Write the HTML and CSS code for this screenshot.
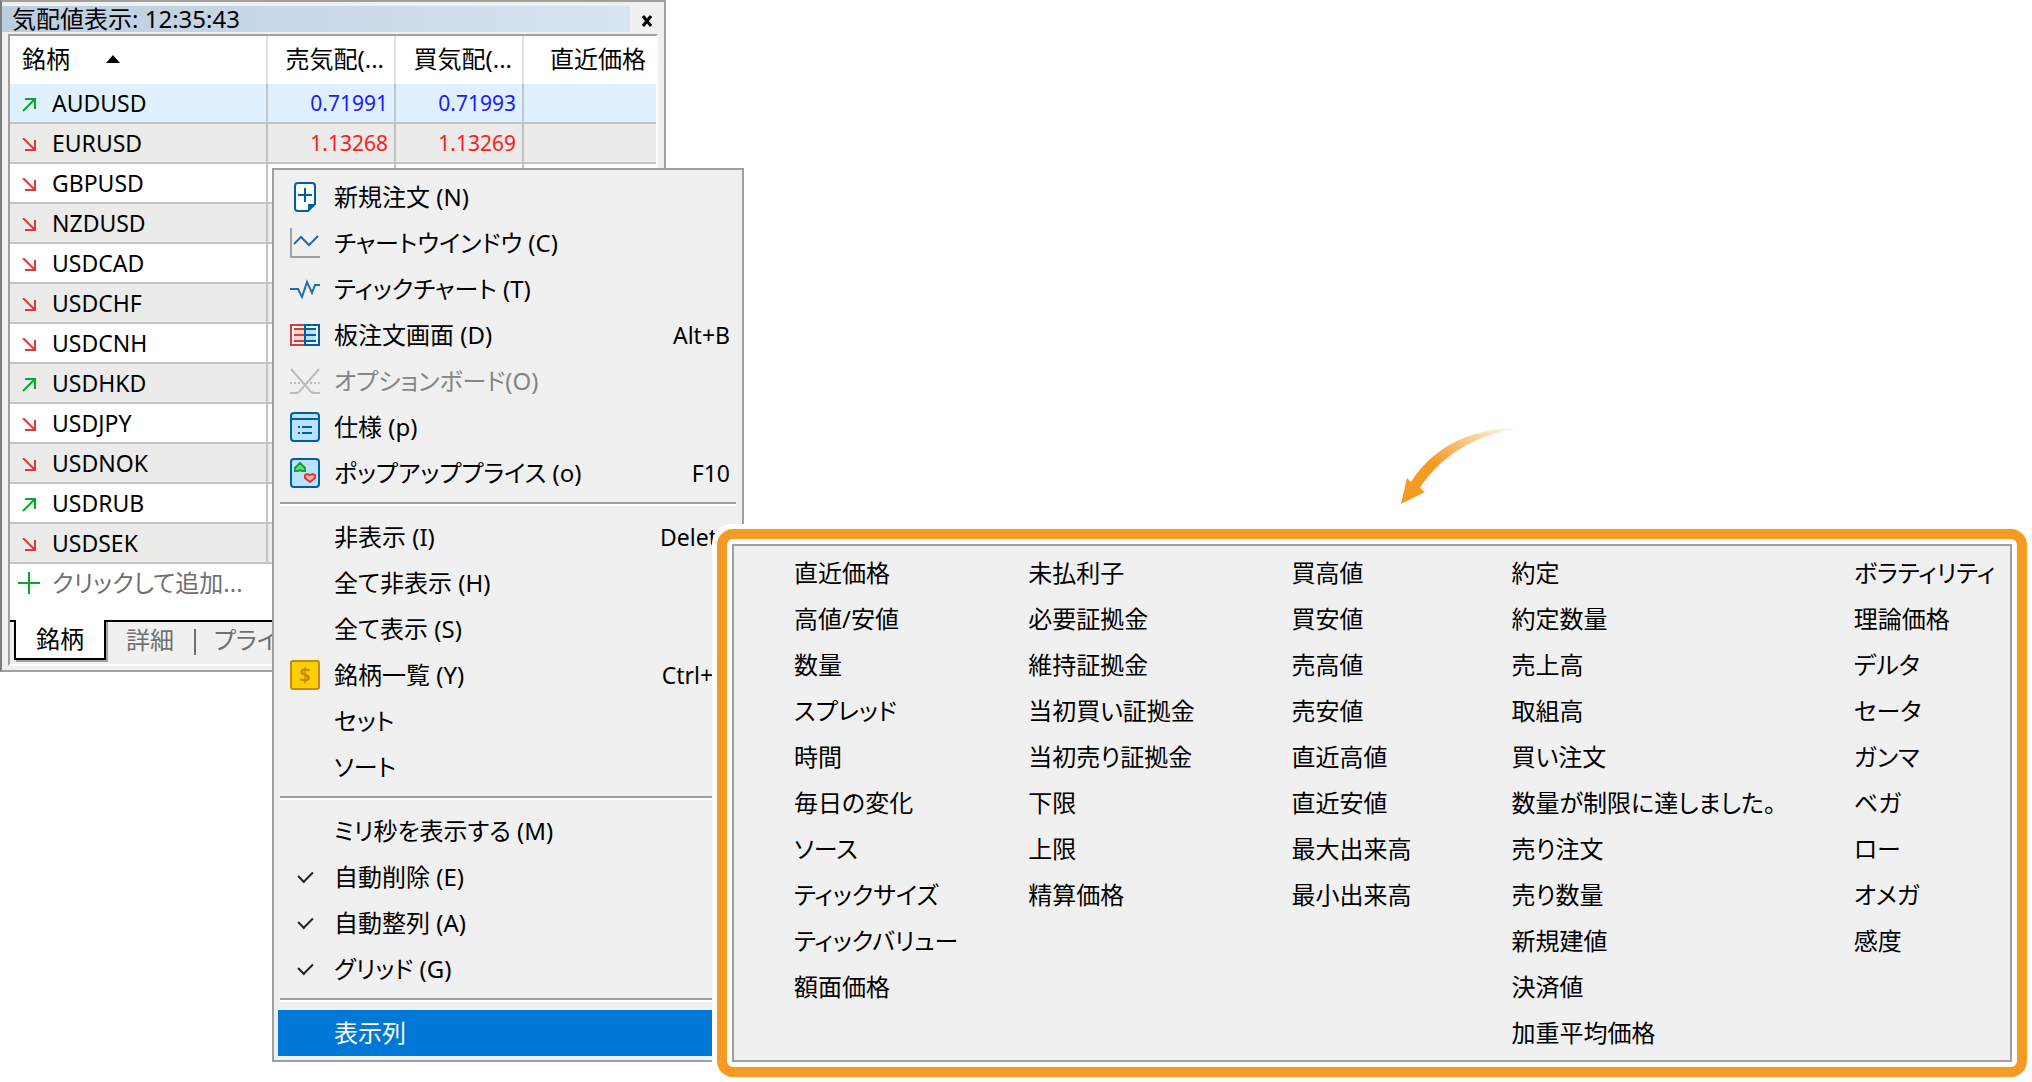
FILE: index.html
```html
<!DOCTYPE html>
<html lang="ja">
<head>
    <meta charset="UTF-8">
    <meta name="viewport" content="width=device-width, initial-scale=1.0">
    <title>気配値表示</title>
    <link rel="stylesheet" href="styles.css">
</head>
<body>
    <svg class="sprite" aria-hidden="true">
        <symbol id="up" viewBox="0 0 14 14"><path d="M3 1h10v10M12 2L1 13" fill="none" stroke="#0aa82a" stroke-width="2"/></symbol>
        <symbol id="down" viewBox="0 0 14 14"><path d="M13 2v10H3M12 11L1 0" fill="none" stroke="#dc3b38" stroke-width="2"/></symbol>
    </svg>

    <section class="window">
        <header class="titlebar">
            <h1>気配値表示: 12:35:43</h1>
            <button class="close" aria-label="閉じる">
                <svg width="12" height="12" viewBox="0 0 12 12"><path d="M2 1l8 10M10 1L2 11" stroke="#000" stroke-width="3"/></svg>
            </button>
        </header>
        <div class="panel">
            <table>
                <thead>
                    <tr>
                        <th class="symbol">銘柄 <svg class="sort" width="14" height="8" viewBox="0 0 14 8"><path d="M7 0l7 8H0z"/></svg></th>
                        <th>売気配(...</th>
                        <th>買気配(...</th>
                        <th>直近価格</th>
                    </tr>
                </thead>
                <tbody>
                    <tr class="selected"><td><svg class="dir"><use href="#up"/></svg>AUDUSD</td><td class="blue">0.71991</td><td class="blue">0.71993</td><td></td></tr>
                    <tr><td><svg class="dir"><use href="#down"/></svg>EURUSD</td><td class="red">1.13268</td><td class="red">1.13269</td><td></td></tr>
                    <tr><td><svg class="dir"><use href="#down"/></svg>GBPUSD</td><td></td><td></td><td></td></tr>
                    <tr><td><svg class="dir"><use href="#down"/></svg>NZDUSD</td><td></td><td></td><td></td></tr>
                    <tr><td><svg class="dir"><use href="#down"/></svg>USDCAD</td><td></td><td></td><td></td></tr>
                    <tr><td><svg class="dir"><use href="#down"/></svg>USDCHF</td><td></td><td></td><td></td></tr>
                    <tr><td><svg class="dir"><use href="#down"/></svg>USDCNH</td><td></td><td></td><td></td></tr>
                    <tr><td><svg class="dir"><use href="#up"/></svg>USDHKD</td><td></td><td></td><td></td></tr>
                    <tr><td><svg class="dir"><use href="#down"/></svg>USDJPY</td><td></td><td></td><td></td></tr>
                    <tr><td><svg class="dir"><use href="#down"/></svg>USDNOK</td><td></td><td></td><td></td></tr>
                    <tr><td><svg class="dir"><use href="#up"/></svg>USDRUB</td><td></td><td></td><td></td></tr>
                    <tr><td><svg class="dir"><use href="#down"/></svg>USDSEK</td><td></td><td></td><td></td></tr>
                </tbody>
            </table>
            <button class="add">
                <svg width="22" height="22" viewBox="0 0 22 22"><path d="M0 11h22M11 0v22" stroke="#0aa82a" stroke-width="2"/></svg>
                クリックして追加...
            </button>
            <nav class="tabs">
                <button class="tab active">銘柄</button>
                <button class="tab">詳細</button>
                <button class="tab">プライス</button>
            </nav>
        </div>
    </section>

    <div class="menu context">
        <button class="item">
            <svg class="icon" viewBox="0 0 30 30"><path d="M8 1h14q3 0 3 3v18l-7 7H8q-3 0-3-3V4q0-3 3-3z" fill="#fff" stroke="#005fa3" stroke-width="2"/><path d="M18 29v-7h7z" fill="#005fa3"/><path d="M8 13h14M15 6v14" stroke="#005fa3" stroke-width="2"/></svg>
            新規注文 (N)
        </button>
        <button class="item">
            <svg class="icon" viewBox="0 0 30 30"><path d="M1 0v29h29" fill="none" stroke="#a0a0a0" stroke-width="2"/><path d="M4 16l7-7 8 8 9-9" fill="none" stroke="#1f6fac" stroke-width="2"/></svg>
            チャートウインドウ (C)
        </button>
        <button class="item">
            <svg class="icon" viewBox="0 0 30 30"><path d="M0 15h8l4 8 5-15 5 11 3-8h5" fill="none" stroke="#1f6fac" stroke-width="2"/></svg>
            ティックチャート (T)
        </button>
        <button class="item">
            <svg class="icon" viewBox="0 0 30 30"><path d="M1 5h28v20H1z" fill="#fff"/><path d="M15 5H1v20h14" fill="none" stroke="#dc3b38" stroke-width="2"/><path d="M15 5h14v20H15z" fill="none" stroke="#005fa3" stroke-width="2"/><path d="M4 8h10v14H4z" fill="#ffd3d0"/><path d="M16 8h10v14H16z" fill="#b9e3ff"/><path d="M4 9h10M4 15h10M4 21h10" stroke="#dc3b38" stroke-width="2"/><path d="M16 9h10M16 15h10M16 21h10" stroke="#005fa3" stroke-width="2"/></svg>
            板注文画面 (D)<kbd>Alt+B</kbd>
        </button>
        <button class="item" disabled>
            <svg class="icon" viewBox="0 0 30 30"><path d="M1 3l20 23 2 1h7M29 3L9 26l-2 1H0" fill="none" stroke="#bcbcbc" stroke-width="2"/><path d="M0 17h30" stroke="#bcbcbc" stroke-width="2" stroke-dasharray="2 2"/></svg>
            オプションボード(O)
        </button>
        <button class="item">
            <svg class="icon" viewBox="0 0 30 30"><rect x="1" y="1" width="28" height="28" rx="3" fill="#b9e3ff" stroke="#005fa3" stroke-width="2"/><path d="M1 7h28M8 15h2M12 15h10M8 21h2M12 21h10" stroke="#005fa3" stroke-width="2"/></svg>
            仕様 (p)
        </button>
        <button class="item">
            <svg class="icon" viewBox="0 0 30 30"><rect x="1" y="1" width="28" height="28" rx="3" fill="#b9e3ff" stroke="#005fa3" stroke-width="2"/><path d="M10 5l5 5v3h-3l-2-1-2 1H5v-3z" fill="#7fd08b" stroke="#0aa82a" stroke-width="2"/><path d="M20 24l-5-4v-3l2-1 3 1 3-1 2 1v3z" fill="#f3aaa8" stroke="#dc3b38" stroke-width="2"/></svg>
            ポップアッププライス (o)<kbd>F10</kbd>
        </button>
        <hr>
        <button class="item"><span class="icon"></span>非表示 (I)<kbd>Delete</kbd></button>
        <button class="item"><span class="icon"></span>全て非表示 (H)</button>
        <button class="item"><span class="icon"></span>全て表示 (S)</button>
        <button class="item">
            <svg class="icon" viewBox="0 0 30 30"><rect x="1" y="1" width="28" height="28" rx="2" fill="#fbd000" stroke="#c98a0c" stroke-width="2"/><text class="dollar" x="15" y="22" text-anchor="middle">$</text></svg>
            銘柄一覧 (Y)<kbd>Ctrl+U</kbd>
        </button>
        <button class="item"><span class="icon"></span>セット</button>
        <button class="item"><span class="icon"></span>ソート</button>
        <hr>
        <button class="item"><span class="icon"></span>ミリ秒を表示する (M)</button>
        <label class="item"><input class="icon" type="checkbox" checked>自動削除 (E)</label>
        <label class="item"><input class="icon" type="checkbox" checked>自動整列 (A)</label>
        <label class="item"><input class="icon" type="checkbox" checked>グリッド (G)</label>
        <hr>
        <button class="item current"><span class="icon"></span>表示列</button>
    </div>

    <svg class="arrow" width="130" height="80" viewBox="0 0 130 80">
        <defs>
            <linearGradient id="fade" x1="0" y1="1" x2="1" y2="0">
                <stop offset="0.4" stop-color="#f59a23"/>
                <stop offset="1" stop-color="#f59a23" stop-opacity="0"/>
            </linearGradient>
        </defs>
        <path d="M1 78L7 52l4 4C31 24 68 0 126 2 78 6 40 30 20 62l5 4z" fill="url(#fade)"/>
    </svg>

    <div class="callout">
        <div class="ring">
            <div class="menu columns">
                <div>
                    <button class="item">直近価格</button>
                    <button class="item">高値/安値</button>
                    <button class="item">数量</button>
                    <button class="item">スプレッド</button>
                    <button class="item">時間</button>
                    <button class="item">毎日の変化</button>
                    <button class="item">ソース</button>
                    <button class="item">ティックサイズ</button>
                    <button class="item">ティックバリュー</button>
                    <button class="item">額面価格</button>
                </div>
                <div>
                    <button class="item">未払利子</button>
                    <button class="item">必要証拠金</button>
                    <button class="item">維持証拠金</button>
                    <button class="item">当初買い証拠金</button>
                    <button class="item">当初売り証拠金</button>
                    <button class="item">下限</button>
                    <button class="item">上限</button>
                    <button class="item">精算価格</button>
                </div>
                <div>
                    <button class="item">買高値</button>
                    <button class="item">買安値</button>
                    <button class="item">売高値</button>
                    <button class="item">売安値</button>
                    <button class="item">直近高値</button>
                    <button class="item">直近安値</button>
                    <button class="item">最大出来高</button>
                    <button class="item">最小出来高</button>
                </div>
                <div>
                    <button class="item">約定</button>
                    <button class="item">約定数量</button>
                    <button class="item">売上高</button>
                    <button class="item">取組高</button>
                    <button class="item">買い注文</button>
                    <button class="item">数量が制限に達しました。</button>
                    <button class="item">売り注文</button>
                    <button class="item">売り数量</button>
                    <button class="item">新規建値</button>
                    <button class="item">決済値</button>
                    <button class="item">加重平均価格</button>
                </div>
                <div>
                    <button class="item">ボラティリティ</button>
                    <button class="item">理論価格</button>
                    <button class="item">デルタ</button>
                    <button class="item">セータ</button>
                    <button class="item">ガンマ</button>
                    <button class="item">ベガ</button>
                    <button class="item">ロー</button>
                    <button class="item">オメガ</button>
                    <button class="item">感度</button>
                </div>
            </div>
        </div>
    </div>
</body>
</html>
```
FILE: styles.css
```css
* { box-sizing: border-box; }
body {
    margin: 0;
    min-height: 100vh;
    position: relative;
    background: #fff;
    color: #000;
    font-family: "Noto Sans", "Noto Sans CJK JP", sans-serif;
    font-size: 24px;
    line-height: 30px;
    font-feature-settings: "palt";
}
button { border: none; background: none; padding: 0; color: inherit; font: inherit; font-feature-settings: inherit; text-align: left; white-space: nowrap; }
.sprite { position: absolute; width: 0; height: 0; }

/* market watch window */
.window {
    position: absolute;
    left: 0;
    top: 0;
    padding: 4px 6px 4px 6px;
    background: #f0f0f0;
    border: 2px solid #a0a0a0;
    border-left-color: #7d7d7d;
}
.titlebar { display: flex; height: 28px; margin: 0 -6px; padding-bottom: 2px; align-items: center; }
.titlebar h1 {
    flex: 1;
    margin: 0;
    padding-left: 10px;
    font-size: 24px;
    font-weight: normal;
    line-height: 26px;
    background: linear-gradient(90deg, #bccddf, #d7e4f2);
}
.close { width: 34px; text-align: center; line-height: 12px; }
.panel { border: 2px solid #a0a0a0; border-right-color: #fff; border-bottom-color: #fff; background: #fff; }

table { border-collapse: separate; border-spacing: 0; table-layout: fixed; width: 646px; }
th, td { padding: 0 10px 0 0; text-align: right; border-right: 2px solid #c3c3c3; white-space: nowrap; }
th { height: 48px; width: 128px; padding-bottom: 2px; font-weight: normal; border-color: #e3e3e3; }
th.symbol { width: 258px; padding-left: 12px; text-align: left; }
th:last-child, td:last-child { width: auto; border-right: none; }
.sort { margin-left: 30px; vertical-align: 5px; }
td { height: 40px; padding-right: 6px; border-bottom: 2px solid #c3c3c3; font-size: 21px; }
td:first-child { padding-left: 12px; text-align: left; font-size: 23px; }
tbody tr:nth-child(even) { background: #ebebe9; }
tbody tr.selected { background: #dff1fe; }
.dir { width: 14px; height: 14px; margin-right: 16px; }
.blue { color: #1a1aff; }
.red { color: #ff1a1a; }

.add { display: flex; align-items: center; gap: 12px; height: 56px; padding: 0 8px 18px; color: #707070; }
.tabs { display: flex; height: 44px; padding-left: 4px; background: #f0f0f0; border-top: 2px solid #000; }
.tab { height: 36px; padding: 0 20px; color: #707070; }
.tab.active { height: 40px; margin-top: -2px; padding: 0 20px; color: #000; background: #fff; border: 2px solid #000; border-top: none; box-shadow: 2px 2px #a0a0a0; }
.tab + .tab + .tab { position: relative; }
.tab + .tab + .tab::before { content: ""; position: absolute; left: 0; top: 7px; width: 2px; height: 26px; background: #707070; }

/* menus */
.menu { background: #f0f0f0; border: 2px solid #a0a0a0; padding: 4px; }
.context { position: absolute; left: 272px; top: 168px; min-width: 472px; }
.item { display: flex; align-items: center; width: 100%; height: 46px; padding: 0 8px 0 12px; white-space: nowrap; }
.item:disabled { color: #858585; }
.item.current { background: #0078d7; color: #fff; }
.icon { flex: none; width: 30px; height: 30px; margin: 0 14px 0 0; }
.item kbd { margin-left: auto; font-family: inherit; font-size: 23px; }
input.icon { appearance: none; display: grid; place-items: center; padding-bottom: 4px; }
input.icon:checked::before { content: ""; width: 7px; height: 12px; border: solid #222; border-width: 0 2px 2px 0; transform: rotate(45deg); }
.dollar { font-size: 20px; font-weight: bold; fill: #c98a0c; }
hr { height: 4px; margin: 6px 2px 8px; border: none; border-top: 2px solid #a0a0a0; background: #fff; }

/* highlighted submenu */
.callout { position: absolute; left: 712px; right: 0; top: 524px; padding: 5px; background: #fff; border-radius: 20px; }
.ring { padding: 5px; border: 10px solid #f59a23; border-radius: 16px; background: #fff; }
.columns { display: grid; grid-template-columns: 234fr 263fr 220fr 342fr 164fr; padding-left: 48px; }
.columns .item { padding-right: 0; }
.arrow { position: absolute; left: 1400px; top: 426px; }
```
